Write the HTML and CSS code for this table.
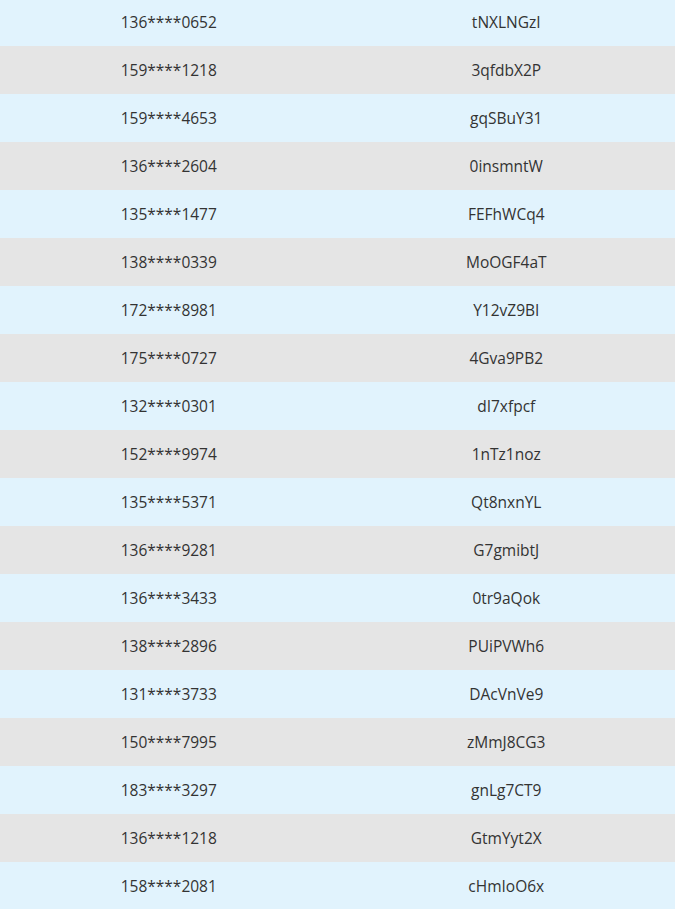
FILE: index.html
```html
<!DOCTYPE html>
<html lang="zh-CN">
<head>
    <meta charset="UTF-8">
    <meta name="viewport" content="width=device-width, initial-scale=1.0">
    <title>中奖名单</title>
    <link rel="stylesheet" href="styles.css">
</head>
<body>
    <div class="list">
        <div class="row"><div class="cell">136****0652</div><div class="cell">tNXLNGzI</div></div>
        <div class="row"><div class="cell">159****1218</div><div class="cell">3qfdbX2P</div></div>
        <div class="row"><div class="cell">159****4653</div><div class="cell">gqSBuY31</div></div>
        <div class="row"><div class="cell">136****2604</div><div class="cell">0insmntW</div></div>
        <div class="row"><div class="cell">135****1477</div><div class="cell">FEFhWCq4</div></div>
        <div class="row"><div class="cell">138****0339</div><div class="cell">MoOGF4aT</div></div>
        <div class="row"><div class="cell">172****8981</div><div class="cell">Y12vZ9BI</div></div>
        <div class="row"><div class="cell">175****0727</div><div class="cell">4Gva9PB2</div></div>
        <div class="row"><div class="cell">132****0301</div><div class="cell">dI7xfpcf</div></div>
        <div class="row"><div class="cell">152****9974</div><div class="cell">1nTz1noz</div></div>
        <div class="row"><div class="cell">135****5371</div><div class="cell">Qt8nxnYL</div></div>
        <div class="row"><div class="cell">136****9281</div><div class="cell">G7gmibtJ</div></div>
        <div class="row"><div class="cell">136****3433</div><div class="cell">0tr9aQok</div></div>
        <div class="row"><div class="cell">138****2896</div><div class="cell">PUiPVWh6</div></div>
        <div class="row"><div class="cell">131****3733</div><div class="cell">DAcVnVe9</div></div>
        <div class="row"><div class="cell">150****7995</div><div class="cell">zMmJ8CG3</div></div>
        <div class="row"><div class="cell">183****3297</div><div class="cell">gnLg7CT9</div></div>
        <div class="row"><div class="cell">136****1218</div><div class="cell">GtmYyt2X</div></div>
        <div class="row"><div class="cell">158****2081</div><div class="cell">cHmIoO6x</div></div>
    </div>
</body>
</html>
```

FILE: styles.css
```css
body {
    margin: 0;
    font-family: "Open Sans", "Noto Sans CJK SC", sans-serif;
    color: #333;
    background-color: #e1f3fd;
}
.list {
    margin-top: -2px;
}
.row {
    display: grid;
    grid-template-columns: 1fr 1fr;
    height: 48px;
    align-items: center;
    background-color: #e1f3fd;
}
.row:nth-child(even) {
    background-color: #e5e5e5;
}
.cell {
    text-align: center;
    font-size: 15.5px;
}
```
